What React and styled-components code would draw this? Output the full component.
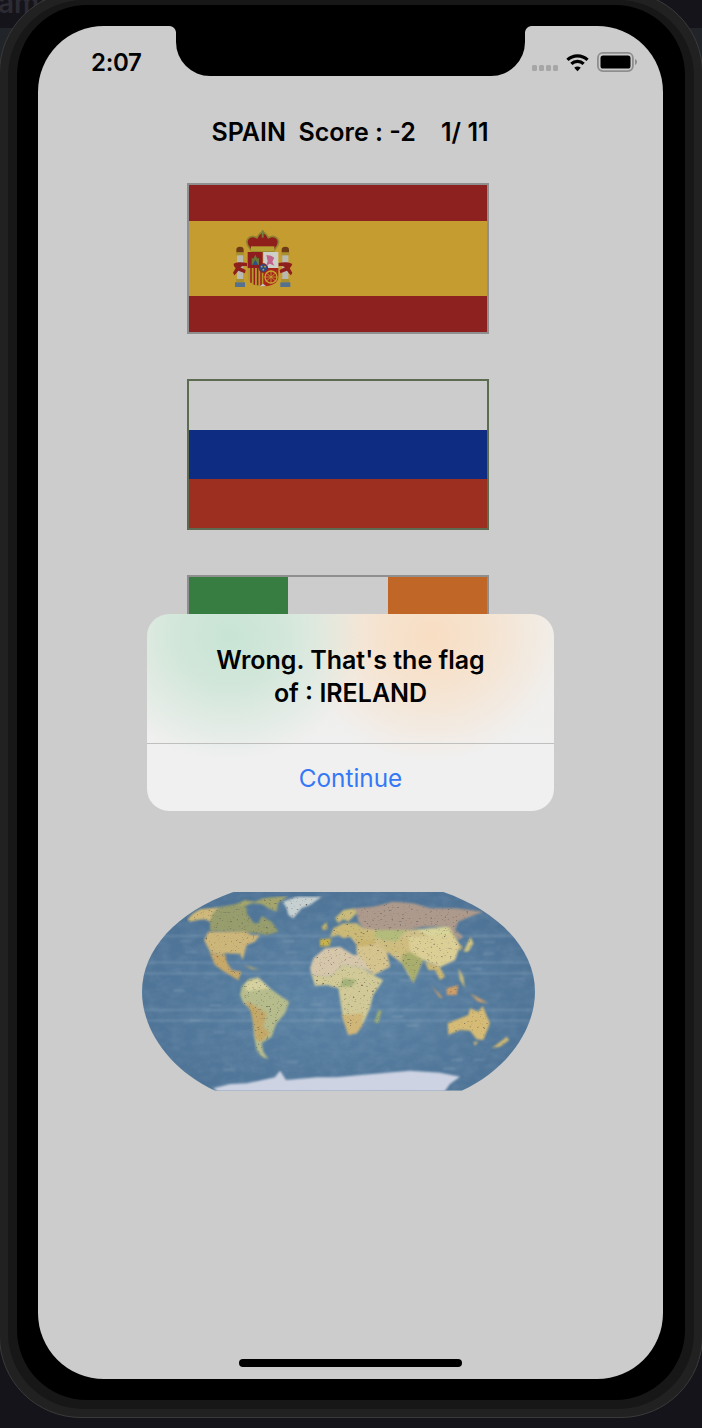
import React from "react";
import styled, { createGlobalStyle } from "styled-components";

const GlobalStyle = createGlobalStyle`
  html, body {
    margin: 0;
    height: 1428px;
    overflow: hidden;
    background: #15141a;
  }
  * {
    box-sizing: border-box;
  }
`;

const Page = styled.div`
  position: relative;
  width: 702px;
  height: 1428px;
  overflow: hidden;
  font-family: Inter, "Liberation Sans", sans-serif;
`;

const BackdropBand = styled.div`
  position: absolute;
  top: 28px;
  left: 0;
  right: 0;
  height: 80px;
  background: #212429;
`;

const BackdropLabel = styled.span`
  position: absolute;
  left: -2px;
  top: -14px;
  font-size: 28px;
  font-weight: 600;
  color: #2c2b33;
`;

const Shell = styled.div`
  position: relative;
  width: 704px;
  height: 1427px;
  margin: -9px -1px 0;
  padding: 8px;
  border: 1px solid #3a3a3a;
  border-radius: 82px;
  background: #212121;
`;

const Ring = styled.div`
  height: 100%;
  padding: 5px 9px 9px;
  border-radius: 76px;
  background: #171717;
`;

const Bezel = styled.div`
  height: 100%;
  padding: 21px 22px 21px 21px;
  border-radius: 70px;
  background: #000;
`;

const Screen = styled.div`
  position: relative;
  display: flex;
  flex-direction: column;
  height: 100%;
  overflow: hidden;
  border-radius: 66px;
  background: #cccccc;
  color: #000;
`;

const Notch = styled.div`
  position: absolute;
  top: 0;
  left: 138px;
  width: 349px;
  height: 50px;
  border-radius: 0 0 34px 34px;
  background: #000;

  &::before,
  &::after {
    content: "";
    position: absolute;
    top: 0;
    width: 7px;
    height: 7px;
  }
  &::before {
    left: -7px;
    background: radial-gradient(circle at 0 100%, transparent 6.5px, #000 7.5px);
  }
  &::after {
    right: -7px;
    background: radial-gradient(circle at 100% 100%, transparent 6.5px, #000 7.5px);
  }
`;

const StatusBar = styled.div`
  display: flex;
  align-items: center;
  justify-content: space-between;
  height: 50px;
  padding: 22px 26px 0 53px;
`;

const Time = styled.span`
  font-size: 24px;
  font-weight: 600;
  letter-spacing: -0.3px;
`;

const StatusIcons = styled.div`
  display: flex;
  align-items: center;
  gap: 8px;
`;

const SignalDots = styled.div`
  display: flex;
  gap: 1.5px;
  margin-top: 12px;
`;

const SignalDot = styled.i`
  display: block;
  width: 5.5px;
  height: 6px;
  border-radius: 1.5px;
  background: #a6a6a6;
`;

const Content = styled.div`
  display: flex;
  flex-direction: column;
  align-items: center;
  padding-right: 25px;
`;

const Title = styled.h1`
  margin: 40px 0 35px 24px;
  font-size: 25px;
  line-height: 32px;
  font-weight: 600;
  white-space: pre;
`;

const Flags = styled.div`
  display: flex;
  flex-direction: column;
  gap: 45px;
`;

const Flag = styled.div`
  display: flex;
  flex-direction: ${(p) => (p.$vertical ? "row" : "column")};
  width: 302px;
  height: 151px;
  border: 2px solid ${(p) => p.$edge};
`;

const Stripe = styled.div`
  flex: ${(p) => p.$grow || 1};
  display: flex;
  align-items: center;
  padding-left: ${(p) => p.$inset || 0}px;
  background: ${(p) => p.$color};
`;

const MapArt = styled.svg`
  display: block;
  width: 393px;
  height: 199px;
  margin-top: 166px;
`;

const Alert = styled.div`
  position: absolute;
  top: 588px;
  left: 109px;
  width: 407px;
  height: 197px;
  overflow: hidden;
  border-radius: 22px;
  background:
    radial-gradient(ellipse 135px 125px at 82px 22px, #c8e4d4 0%, rgba(200, 228, 212, 0.75) 40%, rgba(200, 228, 212, 0) 100%),
    radial-gradient(ellipse 130px 125px at 285px 22px, #f8dec3 0%, rgba(248, 222, 195, 0.7) 40%, rgba(248, 222, 195, 0) 100%),
    linear-gradient(#f0eeea, #f0f0f0 75%);
`;

const AlertMessage = styled.div`
  height: 130px;
  padding: 30px 60px 0;
  border-bottom: 1px solid #bfc0bd;
  text-align: center;
  font-size: 25px;
  line-height: 33px;
  font-weight: 600;
`;

const AlertAction = styled.div`
  display: flex;
  align-items: center;
  justify-content: center;
  height: 67px;
  font-size: 24.3px;
  color: #3478f6;
`;

const HomeBar = styled.div`
  align-self: center;
  width: 223px;
  height: 8px;
  margin-top: auto;
  margin-bottom: 12px;
  border-radius: 4px;
  background: #000;
`;

const Wifi = () => (
  <svg width="23" height="19" viewBox="0 0 24 19">
    <g fill="none" stroke="#000" strokeWidth="3.3">
      <path d="M1.5 6.8a15 15 0 0 1 21 0" />
      <path d="M5.6 11a9 9 0 0 1 12.8 0" />
    </g>
    <path d="M12 18.5 8.6 15a4.8 4.8 0 0 1 6.8 0z" fill="#000" />
  </svg>
);

const Battery = () => (
  <svg width="40" height="20" viewBox="0 0 40 20">
    <rect x="0.9" y="0.9" width="35" height="18.2" rx="5" fill="none" stroke="#8e8e8e" strokeWidth="1.8" />
    <rect x="3.5" y="3.5" width="30" height="13" rx="2.6" fill="#000" />
    <path d="M38 7c1.2.4 2 1.6 2 3s-.8 2.6-2 3z" fill="#8e8e8e" />
  </svg>
);

const CoatOfArms = () => (
  <svg width="80" height="72" viewBox="0 0 240 216" style={{ filter: "blur(0.7px)" }}>
    {[45, 181].map((x) => (
      <g key={x}>
        <rect x={x - 9} y="92" width="18" height="82" fill="#b9b9b4" />
        <rect x={x - 12} y="88" width="24" height="9" fill="#a98f2e" />
        <rect x={x - 12} y="168" width="24" height="10" fill="#a98f2e" />
        <rect x={x - 15} y="178" width="30" height="14" fill="#54728f" />
        <path d={`M${x - 11} 88v-8a11 9 0 0 1 22 0v8z`} fill="#6e3b16" />
      </g>
    ))}
    <path d="M26 122c14-6 26-4 40-2v10c-10-2-14-1-20 3l16 8-2 10-20-8c-6 8-8 10-12 14l-4-8c4-6 6-10 8-14-4-3-6-7-6-13z" fill="#8f1f1b" />
    <path d="M200 122c-14-6-26-4-40-2v10c10-2 14-1 20 3l-16 8 2 10 20-8c6 8 8 10 12 14l4-8c-4-6-6-10-8-14 4-3 6-7 8-13z" fill="#8f1f1b" />
    <path d="M74 76C54 52 74 32 96 44c4-8 8-14 17-18 9 4 13 10 17 18 22-12 42 8 22 32l-6 8H80z" fill="#8f1f1b" stroke="#8f8430" strokeWidth="5" />
    <rect x="78" y="70" width="70" height="14" fill="#b5a032" />
    <rect x="110" y="22" width="6" height="22" fill="#6f7f3d" />
    <path d="M68 87h45v48H68z" fill="#8f1c1f" />
    <path d="M115 87h45v48h-45z" fill="#cfcfca" />
    <path d="M68 135h45v40c0 8 6 13 8 15-30 2-53-8-53-32z" fill="#b5982c" />
    <path d="M115 135h45v26c0 20-22 29-45 29z" fill="#a8251c" />
    <path d="M78 135v44M88 135v50M98 135v52M108 135v54" stroke="#9a1f1a" strokeWidth="4.5" />
    <path d="M80 126v-22l5 3 6-12 6 12 5-3v22z" fill="#6a7a36" />
    <path d="M91 110 82 126h18z" fill="#2e4f88" />
    <path d="M124 96l14 2 10 6-6 12 6 12-14-6-10 6 4-14z" fill="#c0628a" />
    <circle cx="138" cy="162" r="18" fill="none" stroke="#c4a02e" strokeWidth="4" />
    <path d="M122 148l32 28M154 148l-32 28M138 142v40M118 162h40" stroke="#c4a02e" strokeWidth="2.5" />
    <circle cx="115" cy="135" r="13" fill="#2c4c86" stroke="#8f1f1b" strokeWidth="3" />
    <circle cx="110" cy="131" r="2.5" fill="#c9a52e" />
    <circle cx="120" cy="131" r="2.5" fill="#c9a52e" />
    <circle cx="115" cy="140" r="2.5" fill="#c9a52e" />
    <path d="M104 190l10-8 10 8z" fill="#c6c6c0" />
  </svg>
);

// land shapes, in the 3x coordinates the map was measured in
const land = [
  ["#cfbf88", "610,145 680,130 700,145 830,150 960,140 990,195 975,240 930,262 880,240 850,310 815,250 770,215 780,260 730,285 680,220 680,195 660,170 625,165"],
  ["#cfb97a", "172,118 190,100 210,88 268,82 250,100 240,125 225,118 205,120 180,125"],
  ["#979d6c", "240,125 250,100 268,82 330,70 350,85 350,100 372,130 385,130 395,108 425,125 445,155 410,165 385,160 360,158 340,155 240,152"],
  ["#a3a56d", "320,72 345,60 375,65 400,55 445,50 475,48 445,68 440,95 415,85 395,72 365,70 340,82"],
  ["#c6d0d0", "458,65 500,50 575,50 540,75 515,85 490,115 475,105 470,85"],
  ["#cdb679", "222,180 235,155 345,155 365,165 390,165 375,185 350,195 338,240 330,222 285,220 265,225 240,215"],
  ["#c7a869", "238,215 262,225 285,222 290,245 305,270 335,275 325,300 340,310 315,295 275,270 255,255"],
  ["#b9a86e", "340,255 370,263 388,268 365,268"],
  ["#b6bc8c", "335,320 355,298 385,292 415,320 440,340 478,365 465,400 440,430 425,470 395,490 400,515 415,538 395,530 380,510 372,470 368,420 365,390 340,370 330,345"],
  ["#c4a868", "345,360 370,375 410,400 400,440 420,460 395,485 378,480 370,430 362,395"],
  ["#d6d2a0", "345,310 385,295 420,325 380,330 350,335"],
  ["#d6c7ab", "540,265 550,235 585,205 630,200 670,225 700,225 730,280 700,265 640,255 600,290 545,285"],
  ["#d1ca98", "545,285 600,290 640,255 700,265 730,285 760,300 730,345 720,385 700,430 680,460 655,465 640,420 632,370 625,325 590,315 555,318"],
  ["#d0b677", "635,405 700,400 695,440 680,460 655,465"],
  ["#a3b278", "640,295 680,300 665,320 630,320"],
  ["#9fae72", "745,390 755,392 745,428 733,428"],
  ["#c9b24c", "570,178 605,175 598,198 570,200"],
  ["#c3b06a", "575,140 590,125 592,148 578,150"],
  ["#cbb977", "600,172 610,145 640,130 680,130 700,150 735,155 735,185 690,185 660,170 640,175 625,165"],
  ["#c9bb7a", "615,115 640,90 675,85 680,100 655,125 640,118 625,130"],
  ["#ad9a8c", "680,100 675,85 730,80 790,65 850,70 900,85 980,85 1060,95 1020,110 985,125 975,150 1000,170 985,180 960,140 880,140 830,150 735,150 700,145 685,125"],
  ["#b4bc7c", "735,150 830,150 800,185 775,195 750,175 735,175"],
  ["#d8d49a", "860,150 950,140 965,165 900,170"],
  ["#dccf96", "835,170 900,170 965,165 990,195 975,240 930,260 880,240 840,215"],
  ["#cfbd7f", "740,180 800,185 835,170 840,215 820,225 770,215"],
  ["#d6c48e", "680,195 740,195 770,215 780,260 730,285 700,240 680,220"],
  ["#c9b46e", "680,180 735,180 735,195 680,200"],
  ["#a9ae6d", "815,225 840,215 880,240 865,270 850,310 835,275 815,250"],
  ["#cdb874", "885,245 930,262 945,290 930,300 915,270 895,270"],
  ["#cf9e68", "905,318 940,355 928,352"],
  ["#cf9e68", "950,325 985,315 980,345 950,345"],
  ["#c9bb7a", "985,265 1000,290 1005,325 990,300"],
  ["#cf9e68", "1020,340 1075,370 1045,365"],
  ["#d3c47f", "1000,215 1022,170 1030,190 1015,215"],
  ["#c8b070", "985,190 998,200 990,215"],
  ["#d5bb74", "953,430 1015,405 1020,385 1045,395 1058,378 1080,430 1060,480 1040,478 1020,452 990,450 955,465"],
  ["#cdb874", "1030,485 1045,485 1035,497"],
  ["#cdb874", "1085,505 1130,470 1138,480 1110,500"],
];

const seaLabels = [
  [150, 182], [165, 215], [460, 182], [465, 215], [1060, 185], [1060, 220], [1150, 295], [1020, 265],
  [240, 375], [130, 330], [540, 372], [550, 418], [250, 455], [830, 435], [965, 538], [1030, 538],
  [470, 545], [280, 568], [940, 565], [180, 420], [810, 300], [785, 408],
];

const WorldMap = () => (
  <MapArt viewBox="36 36 1179 597">
    <defs>
      <clipPath id="globe">
        <path d="M310 36C140 95 36 210 36 335C36 450 120 570 255 632H995C1130 570 1215 450 1215 335C1215 210 1110 95 940 36Z" />
      </clipPath>
      <radialGradient id="sea" cx="0.5" cy="0.55" r="0.6">
        <stop offset="0" stopColor="#5b83a5" />
        <stop offset="1" stopColor="#4b7093" />
      </radialGradient>
      <filter id="mottle" x="0" y="0" width="100%" height="100%">
        <feTurbulence type="fractalNoise" baseFrequency="0.025 0.04" numOctaves="3" seed="4" />
        <feColorMatrix values="0 0 0 0 0.85  0 0 0 0 0.9  0 0 0 0 0.95  0.9 0 0 0 -0.28" />
        <feGaussianBlur stdDeviation="2" />
      </filter>
      <filter id="soft">
        <feGaussianBlur stdDeviation="2.6" />
      </filter>
      <filter id="printed" x="0" y="0" width="100%" height="100%">
        <feTurbulence type="fractalNoise" baseFrequency="0.12 0.22" numOctaves="2" seed="9" result="noise" />
        <feColorMatrix in="noise" values="0 0 0 0 0.12  0 0 0 0 0.11  0 0 0 0 0.09  4 0 0 0 -2.5" result="ink" />
        <feComposite in="ink" in2="SourceAlpha" operator="in" result="marks" />
        <feGaussianBlur in="marks" stdDeviation="1.4" result="softMarks" />
        <feGaussianBlur in="SourceGraphic" stdDeviation="2.6" result="base" />
        <feMerge>
          <feMergeNode in="base" />
          <feMergeNode in="softMarks" />
        </feMerge>
      </filter>
    </defs>
    <g clipPath="url(#globe)">
      <rect x="0" y="0" width="1260" height="660" fill="url(#sea)" />
      <rect x="36" y="36" width="1179" height="597" filter="url(#mottle)" opacity="0.16" />
      <g filter="url(#soft)">
        {[168, 248, 280, 390, 422].map((y) => (
          <line key={y} x1="36" x2="1215" y1={y} y2={y} stroke="#b5c8d6" strokeWidth="2.4" strokeOpacity="0.5" />
        ))}
        {seaLabels.map(([x, y], i) => (
          <rect key={i} x={x} y={y} width="34" height="3" fill="#c5d4df" fillOpacity="0.35" />
        ))}
      </g>
      <g filter="url(#printed)">
        {land.map(([fill, points], i) => (
          <polygon key={i} points={points} fill={fill} />
        ))}
      </g>
      <polygon
        points="250,625 300,612 350,610 435,592 450,572 468,600 560,592 620,592 700,584 770,578 840,572 930,578 990,590 960,612 940,640 270,640"
        fill="#cdd3e2"
        filter="url(#soft)"
      />
    </g>
  </MapArt>
);

export default function App() {
  return (
    <Page>
      <GlobalStyle />
      <BackdropBand />
      <BackdropLabel>ame</BackdropLabel>
      <Shell>
        <Ring>
          <Bezel>
            <Screen>
              <StatusBar>
                <Time>2:07</Time>
                <StatusIcons>
                  <SignalDots>
                    <SignalDot />
                    <SignalDot />
                    <SignalDot />
                    <SignalDot />
                  </SignalDots>
                  <Wifi />
                  <Battery />
                </StatusIcons>
              </StatusBar>
              <Content>
                <Title>{"SPAIN  Score : -2    1/ 11"}</Title>
                <Flags>
                  <Flag $edge="#8f8f8f">
                    <Stripe $color="#8c211f" />
                    <Stripe $color="#c59c30" $grow={2.05} $inset={36}>
                      <CoatOfArms />
                    </Stripe>
                    <Stripe $color="#8c211f" />
                  </Flag>
                  <Flag $edge="#5d6b50">
                    <Stripe $color="#cccccc" />
                    <Stripe $color="#0e2d82" />
                    <Stripe $color="#9c2f20" />
                  </Flag>
                  <Flag $edge="#8f8f8f" $vertical>
                    <Stripe $color="#377d42" />
                    <Stripe $color="#cccccc" />
                    <Stripe $color="#c06727" />
                  </Flag>
                </Flags>
                <WorldMap />
              </Content>
              <HomeBar />
              <Notch />
              <Alert>
                <AlertMessage>Wrong. That's the flag of : IRELAND</AlertMessage>
                <AlertAction>Continue</AlertAction>
              </Alert>
            </Screen>
          </Bezel>
        </Ring>
      </Shell>
    </Page>
  );
}
